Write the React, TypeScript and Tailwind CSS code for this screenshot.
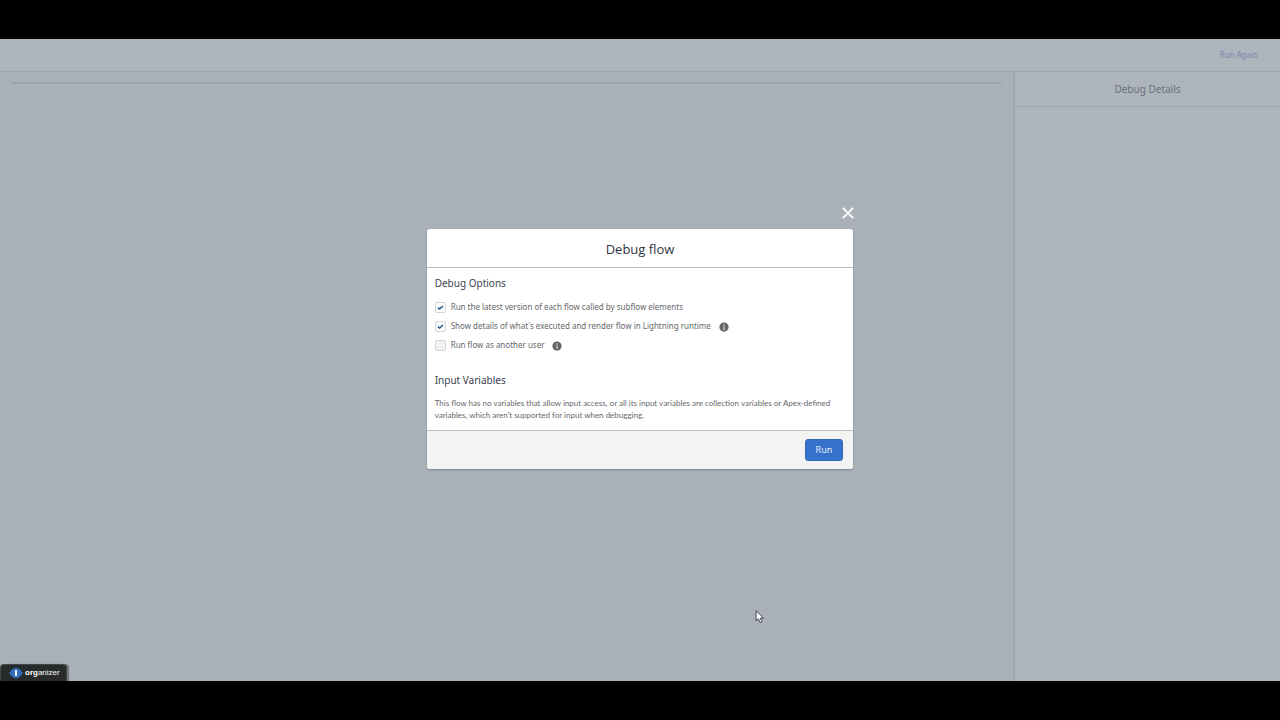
import { useState } from "react";

function InfoIcon() {
  return (
    <svg viewBox="0 0 16 16" className="size-2.5 shrink-0" aria-hidden="true">
      <circle cx="8" cy="8" r="7.4" fill="#666564" />
      <circle cx="8" cy="4.9" r="1.2" fill="#dedede" />
      <path d="M6.6 7.2h2.2v3.4h1v1.2H6.2v-1.2h1V8.4h-.6z" fill="#dedede" />
    </svg>
  );
}

type OptionProps = { id: string; label: string; initial: boolean; info?: boolean };

function Option({ id, label, initial, info }: OptionProps) {
  const [checked, setChecked] = useState(initial);
  return (
    <div className="flex h-[19px] items-center">
      <span className="relative flex size-[11px] shrink-0">
        <input
          id={id}
          type="checkbox"
          checked={checked}
          onChange={(e) => setChecked(e.target.checked)}
          className="size-full appearance-none rounded-[2px] border border-[#d6d4d2] bg-[#f3f2f1] checked:bg-[#fbfcfd]"
        />
        {checked && (
          <svg viewBox="0 0 11 11" className="pointer-events-none absolute inset-0" aria-hidden="true">
            <path d="M2.9 5.6 4.6 7.1 8 4" fill="none" stroke="#2c5590" strokeWidth="1.5" />
          </svg>
        )}
      </span>
      <label htmlFor={id} className="ml-[5px] text-[8px] text-[#66686b]">
        {label}
      </label>
      {info && (
        <button type="button" aria-label={"Help: " + label} className="ml-2 mt-0.5">
          <InfoIcon />
        </button>
      )}
    </div>
  );
}

function DebugDialog() {
  return (
    <section
      role="dialog"
      aria-labelledby="dialog-title"
      className="relative w-1/3 rounded-[3px] bg-white shadow-[0_1px_2px_rgba(60,70,85,0.4)]"
    >
      <button type="button" aria-label="Close" className="absolute -top-[22px] -right-px text-white">
        <svg viewBox="0 0 12 12" className="size-3" aria-hidden="true">
          <path d="M1.3 1.3 10.7 10.7M10.7 1.3 1.3 10.7" stroke="currentColor" strokeWidth="1.9" strokeLinecap="round" />
        </svg>
      </button>
      <header className="flex h-[39px] items-center justify-center border-b border-[#b9bcc1] pt-0.5">
        <h1 id="dialog-title" className="font-['Open_Sans','Noto_Sans',sans-serif] text-[13px] leading-4 text-[#2f3541]">
          Debug flow
        </h1>
      </header>
      <div className="px-2 pt-[7px] pb-[9px]">
        <h2 className="text-[10px] leading-4 text-[#3b4252]">Debug Options</h2>
        <div className="mt-[7px]">
          <Option id="latest" label="Run the latest version of each flow called by subflow elements" initial />
          <Option id="details" label="Show details of what's executed and render flow in Lightning runtime" initial info />
          <Option id="other-user" label="Run flow as another user" initial={false} info />
        </div>
        <h2 className="mt-[17px] text-[10px] leading-4 text-[#3b4252]">Input Variables</h2>
        <p className="mt-[9px] font-['Lato','Noto_Sans',sans-serif] text-[8px] leading-3 text-[#66686b]">
          This flow has no variables that allow input access, or all its input variables are collection variables or
          Apex-defined variables, which aren't supported for input when debugging.
        </p>
      </div>
      <footer className="flex h-[39px] items-center justify-end rounded-b-[3px] border-t border-[#bcbfc3] bg-[#f3f3f3] px-2.5">
        <button type="button" className="h-[22px] rounded-[3px] border border-[#3067b8] bg-[#3672cb] px-2.5 text-[9px] leading-3 text-[#e6f0ff]">
          Run
        </button>
      </footer>
    </section>
  );
}

export default function App() {
  return (
    <div className="flex min-h-screen flex-col bg-black py-[39px] font-['Noto_Sans','Open_Sans',sans-serif]">
      <div className="relative flex flex-1 flex-col overflow-hidden bg-[#a9b0b8]">
        <header className="flex h-[33px] items-center justify-end border-b border-[#9da4ac] bg-[#aeb5bd] pr-[22px]">
          <button type="button" className="text-[8px] text-[#7a88ab]">Run Again</button>
        </header>
        <div className="flex flex-1">
          <main className="flex flex-1 flex-col justify-between">
            <hr className="mx-[11px] mt-2.5 border-t-2 border-[#9da4ab]" />
            <button
              type="button"
              className="flex h-[17px] w-[67px] items-center gap-0.5 rounded-t-[4px] border border-b-0 border-[#454849] bg-[#282b2b] pl-2 font-['Liberation_Sans',sans-serif] text-[8px] text-white shadow-[2px_0_1px_rgba(70,75,80,0.6)]"
            >
              <svg viewBox="0 0 14 12" className="h-3 w-3.5" aria-hidden="true">
                <path d="M0 6 3 2.5Q7-1 11 2.5L14 6l-3 3.5Q7 13 3 9.5Z" fill="#2f6cb5" />
                <path d="M6 3h2v6H6z" fill="#eef5ff" />
              </svg>
              <span><b>org</b>anizer</span>
            </button>
          </main>
          <aside className="w-[267px] border-l-2 border-[#a1a8b0] bg-[#adb4bc]">
            <h2 className="flex h-[35px] items-center justify-center border-b border-[#9da4ac] text-[10px] text-[#6a727c]">
              Debug Details
            </h2>
          </aside>
        </div>
        <div className="absolute inset-0 flex items-center justify-center pb-[23px]">
          <DebugDialog />
        </div>
      </div>
      <svg viewBox="0 0 12 18" className="pointer-events-none absolute left-[755px] top-[610px] h-[14px] w-2.5" aria-hidden="true">
        <path d="M1 1v13l3-2.8 2.2 5 2.3-1-2.2-4.8h4.2Z" fill="#fff" stroke="#30343a" strokeWidth="1.1" />
      </svg>
    </div>
  );
}
